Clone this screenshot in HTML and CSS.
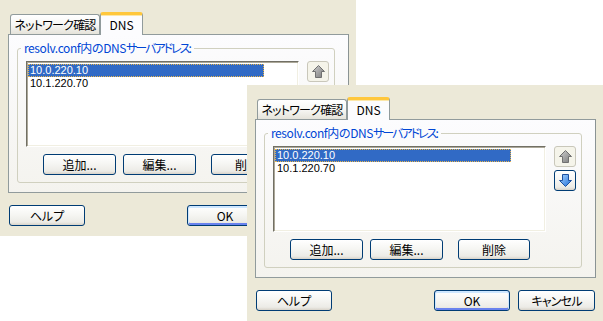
FILE: index.html
```html
<!DOCTYPE html>
<html lang="ja">
<head>
    <meta charset="UTF-8">
    <title>DNS設定</title>
    <link rel="stylesheet" href="styles.css">
</head>
<body>

<svg class="defs" width="0" height="0" aria-hidden="true">
    <defs>
        <linearGradient id="greyArrow" x1="0" y1="0" x2="1" y2="1">
            <stop offset="0" stop-color="#d0d0d0"/>
            <stop offset="1" stop-color="#7a7a7a"/>
        </linearGradient>
        <linearGradient id="blueArrow" x1="0" y1="0" x2="1" y2="1">
            <stop offset="0" stop-color="#a8d6ff"/>
            <stop offset="1" stop-color="#1f6cd8"/>
        </linearGradient>
    </defs>
</svg>

<div class="desktop">

    <!-- back window -->
    <div class="dialog dialog-back">
        <div class="tabs">
            <div class="tab">ネットワーク確認</div>
            <div class="tab tab-active">DNS</div>
        </div>
        <div class="tab-page">
            <fieldset class="group">
                <legend>resolv.conf内のDNS<span class="kana">サーバアドレス</span>:</legend>
                <div class="list-row">
                    <ul class="listbox">
                        <li class="selected">10.0.220.10</li>
                        <li>10.1.220.70</li>
                    </ul>
                    <div class="move-buttons">
                        <button class="btn-icon" disabled>
                            <svg width="13" height="13" viewBox="0 0 13 13"><path d="M6.5 0.5 L12.5 6.5 H9.5 V12.5 H3.5 V6.5 H0.5 Z" fill="url(#greyArrow)" stroke="#707070"/></svg>
                        </button>
                        <button class="btn-icon">
                            <svg width="13" height="13" viewBox="0 0 13 13"><path d="M6.5 12.5 L12.5 6.5 H9.5 V0.5 H3.5 V6.5 H0.5 Z" fill="url(#blueArrow)" stroke="#1c4f9f"/></svg>
                        </button>
                    </div>
                </div>
                <div class="edit-buttons">
                    <button class="btn">追加...</button>
                    <button class="btn">編集...</button>
                    <button class="btn btn-delete">削除</button>
                </div>
            </fieldset>
        </div>
        <div class="dialog-buttons">
            <button class="btn btn-help">ヘルプ</button>
            <button class="btn btn-default">OK</button>
            <button class="btn btn-cancel">キャンセル</button>
        </div>
    </div>

    <!-- front window -->
    <div class="dialog dialog-front">
        <div class="tabs">
            <div class="tab">ネットワーク確認</div>
            <div class="tab tab-active">DNS</div>
        </div>
        <div class="tab-page">
            <fieldset class="group">
                <legend>resolv.conf内のDNS<span class="kana">サーバアドレス</span>:</legend>
                <div class="list-row">
                    <ul class="listbox">
                        <li class="selected">10.0.220.10</li>
                        <li>10.1.220.70</li>
                    </ul>
                    <div class="move-buttons">
                        <button class="btn-icon" disabled>
                            <svg width="13" height="13" viewBox="0 0 13 13"><path d="M6.5 0.5 L12.5 6.5 H9.5 V12.5 H3.5 V6.5 H0.5 Z" fill="url(#greyArrow)" stroke="#707070"/></svg>
                        </button>
                        <button class="btn-icon">
                            <svg width="13" height="13" viewBox="0 0 13 13"><path d="M6.5 12.5 L12.5 6.5 H9.5 V0.5 H3.5 V6.5 H0.5 Z" fill="url(#blueArrow)" stroke="#1c4f9f"/></svg>
                        </button>
                    </div>
                </div>
                <div class="edit-buttons">
                    <button class="btn">追加...</button>
                    <button class="btn">編集...</button>
                    <button class="btn btn-delete">削除</button>
                </div>
            </fieldset>
        </div>
        <div class="dialog-buttons">
            <button class="btn btn-help">ヘルプ</button>
            <button class="btn btn-default">OK</button>
            <button class="btn btn-cancel">キャンセル</button>
        </div>
    </div>

</div>

</body>
</html>
```

FILE: styles.css
```css
body {
    margin: 0;
    background: #fff;
    font-family: "Noto Sans CJK JP", "Liberation Sans", sans-serif;
    font-size: 12px;
    font-feature-settings: "palt";
    color: #000;
}

.defs {
    position: absolute;
}

.desktop {
    position: relative;
    width: 603px;
    height: 321px;
    overflow: hidden;
}

/* windows */
.dialog {
    position: absolute;
    width: 356px;
    height: 236px;
    box-sizing: border-box;
    padding: 12px 7px 0 8px;
    background: #ece9d8;
}

.dialog-back {
    left: 0;
    top: 0;
}

.dialog-front {
    left: 247px;
    top: 85px;
}

/* tabs */
.tabs {
    display: flex;
    align-items: flex-end;
    height: 22px;
    padding-left: 2px;
}

.tab {
    width: 90px;
    height: 20px;
    box-sizing: border-box;
    border: 1px solid #919b9c;
    border-bottom: none;
    border-radius: 3px 3px 0 0;
    background: linear-gradient(#fff, #f7f7f4 50%, #e5e3da);
    display: flex;
    align-items: center;
    justify-content: center;
    line-height: 14px;
    letter-spacing: -0.8px;
    padding-top: 1px;
}

.tab-active {
    position: relative;
    z-index: 1;
    width: 43px;
    height: 23px;
    margin-bottom: -1px;
    border-top: 3px solid #ffc73c;
    box-shadow: inset 0 1px 0 #fce7a8;
    background: #fcfcfe;
    letter-spacing: 0;
    padding-top: 0;
}

.tab-page {
    height: 159px;
    box-sizing: border-box;
    border: 1px solid #919b9c;
    border-right-color: #8a9394;
    background: linear-gradient(#fcfcfe, #f4f3ee);
    padding: 6px 0 0 8px;
}

/* group box */
.group {
    width: 318px;
    margin: 0;
    min-width: 0;
    box-sizing: border-box;
    border: 1px solid #d0d0bf;
    border-radius: 3px;
    padding: 6px 0 7px 8px;
}

.group legend {
    margin-left: -5px;
    padding: 0 3px;
    line-height: 14px;
    letter-spacing: -0.4px;
    color: #0046d5;
}

.group legend .kana {
    letter-spacing: -2px;
}

.list-row {
    display: flex;
    align-items: flex-start;
}

.listbox {
    width: 273px;
    height: 86px;
    box-sizing: border-box;
    margin: 0;
    padding: 2px 0 0 1px;
    list-style: none;
    background: #fff;
    border: 1px solid;
    border-color: #716f64 #fff #fff #716f64;
    box-shadow: inset 1px 1px 0 #aca899, inset -1px -1px 0 #f1efe2;
}

.listbox li {
    width: 236px;
    height: 13px;
    box-sizing: border-box;
    padding-left: 2px;
    font-family: "Liberation Sans", sans-serif;
    font-size: 11px;
    line-height: 13px;
}

.listbox li.selected {
    background: #316ac5;
    color: #fff;
    outline: 1px dotted #e8b44a;
    outline-offset: -1px;
}

.move-buttons {
    display: flex;
    flex-direction: column;
    gap: 3px;
    margin-left: 8px;
}

/* buttons */
.btn,
.btn-icon {
    height: 21px;
    box-sizing: border-box;
    padding: 0;
    font: inherit;
    line-height: 14px;
    color: #000;
    border: 1px solid #003c74;
    border-radius: 3px;
    background: linear-gradient(#fff, #f6f6f3 45%, #ecebe6 85%, #d8d3c9);
}

.btn {
    width: 73px;
}

.btn-icon {
    width: 22px;
    display: flex;
    align-items: center;
    justify-content: center;
}

.btn-icon:disabled {
    border-color: #c9c7ba;
    background: #f5f4ea;
}

.edit-buttons {
    display: flex;
    margin-top: 7px;
    padding-left: 17px;
    gap: 7px;
}

.btn-delete {
    width: 72px;
    margin-left: 8px;
}

.dialog-buttons {
    display: flex;
    margin-top: 12px;
    padding: 0 1px;
}

.btn-help {
    width: 76px;
}

.btn-default {
    width: 76px;
    margin-left: auto;
    box-shadow: inset 0 1px 0 1px #cee7ff, inset 0 -1px 0 1px #6982ee;
}

.btn-cancel {
    width: 77px;
    margin-left: 8px;
    letter-spacing: -0.8px;
}
```
